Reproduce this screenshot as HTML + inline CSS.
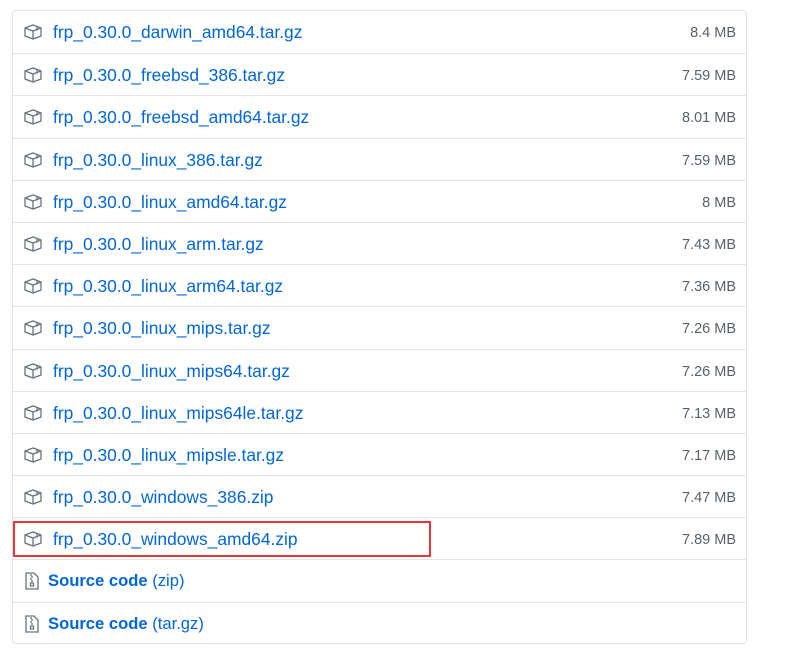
<!DOCTYPE html>
<html><head><meta charset="utf-8"><style>
body{margin:0;background:#fff;font-family:"Liberation Sans",sans-serif;width:790px;height:658px;overflow:hidden;position:relative}
.box{position:absolute;left:12px;top:10px;width:733px;height:632px;border:1px solid #e1e4e8;border-radius:4px}
.row{height:42.2px;box-sizing:border-box;border-top:1px solid #e1e4e8;position:relative}
.row:first-child{border-top:none}
.row svg{position:absolute;left:11px;top:13px}
.name{position:absolute;left:40px;top:11px;color:#0366d6;font-size:17.4px}
.size{position:absolute;right:10px;top:14px;color:#586069;font-size:14.5px}
.src{left:35px;font-weight:bold;font-size:16.6px}
.src span{font-weight:normal}
.red{position:absolute;left:13px;top:521px;width:414px;height:32px;border:2px solid #e8363b}
</style></head><body>
<div class="box">
<div class="row"><svg width="18" height="16" viewBox="0 0 18 16" fill="none" stroke="#6a737d" stroke-width="1.3"><path d="M1 4L9 1l8 3v8l-8 3-8-3z M1 4l8 3 8-3 M9 7v8 M13 2.5v4"/></svg><span class="name">frp_0.30.0_darwin_amd64.tar.gz</span><span class="size">8.4 MB</span></div>
<div class="row"><svg width="18" height="16" viewBox="0 0 18 16" fill="none" stroke="#6a737d" stroke-width="1.3"><path d="M1 4L9 1l8 3v8l-8 3-8-3z M1 4l8 3 8-3 M9 7v8 M13 2.5v4"/></svg><span class="name">frp_0.30.0_freebsd_386.tar.gz</span><span class="size">7.59 MB</span></div>
<div class="row"><svg width="18" height="16" viewBox="0 0 18 16" fill="none" stroke="#6a737d" stroke-width="1.3"><path d="M1 4L9 1l8 3v8l-8 3-8-3z M1 4l8 3 8-3 M9 7v8 M13 2.5v4"/></svg><span class="name">frp_0.30.0_freebsd_amd64.tar.gz</span><span class="size">8.01 MB</span></div>
<div class="row"><svg width="18" height="16" viewBox="0 0 18 16" fill="none" stroke="#6a737d" stroke-width="1.3"><path d="M1 4L9 1l8 3v8l-8 3-8-3z M1 4l8 3 8-3 M9 7v8 M13 2.5v4"/></svg><span class="name">frp_0.30.0_linux_386.tar.gz</span><span class="size">7.59 MB</span></div>
<div class="row"><svg width="18" height="16" viewBox="0 0 18 16" fill="none" stroke="#6a737d" stroke-width="1.3"><path d="M1 4L9 1l8 3v8l-8 3-8-3z M1 4l8 3 8-3 M9 7v8 M13 2.5v4"/></svg><span class="name">frp_0.30.0_linux_amd64.tar.gz</span><span class="size">8 MB</span></div>
<div class="row"><svg width="18" height="16" viewBox="0 0 18 16" fill="none" stroke="#6a737d" stroke-width="1.3"><path d="M1 4L9 1l8 3v8l-8 3-8-3z M1 4l8 3 8-3 M9 7v8 M13 2.5v4"/></svg><span class="name">frp_0.30.0_linux_arm.tar.gz</span><span class="size">7.43 MB</span></div>
<div class="row"><svg width="18" height="16" viewBox="0 0 18 16" fill="none" stroke="#6a737d" stroke-width="1.3"><path d="M1 4L9 1l8 3v8l-8 3-8-3z M1 4l8 3 8-3 M9 7v8 M13 2.5v4"/></svg><span class="name">frp_0.30.0_linux_arm64.tar.gz</span><span class="size">7.36 MB</span></div>
<div class="row"><svg width="18" height="16" viewBox="0 0 18 16" fill="none" stroke="#6a737d" stroke-width="1.3"><path d="M1 4L9 1l8 3v8l-8 3-8-3z M1 4l8 3 8-3 M9 7v8 M13 2.5v4"/></svg><span class="name">frp_0.30.0_linux_mips.tar.gz</span><span class="size">7.26 MB</span></div>
<div class="row"><svg width="18" height="16" viewBox="0 0 18 16" fill="none" stroke="#6a737d" stroke-width="1.3"><path d="M1 4L9 1l8 3v8l-8 3-8-3z M1 4l8 3 8-3 M9 7v8 M13 2.5v4"/></svg><span class="name">frp_0.30.0_linux_mips64.tar.gz</span><span class="size">7.26 MB</span></div>
<div class="row"><svg width="18" height="16" viewBox="0 0 18 16" fill="none" stroke="#6a737d" stroke-width="1.3"><path d="M1 4L9 1l8 3v8l-8 3-8-3z M1 4l8 3 8-3 M9 7v8 M13 2.5v4"/></svg><span class="name">frp_0.30.0_linux_mips64le.tar.gz</span><span class="size">7.13 MB</span></div>
<div class="row"><svg width="18" height="16" viewBox="0 0 18 16" fill="none" stroke="#6a737d" stroke-width="1.3"><path d="M1 4L9 1l8 3v8l-8 3-8-3z M1 4l8 3 8-3 M9 7v8 M13 2.5v4"/></svg><span class="name">frp_0.30.0_linux_mipsle.tar.gz</span><span class="size">7.17 MB</span></div>
<div class="row"><svg width="18" height="16" viewBox="0 0 18 16" fill="none" stroke="#6a737d" stroke-width="1.3"><path d="M1 4L9 1l8 3v8l-8 3-8-3z M1 4l8 3 8-3 M9 7v8 M13 2.5v4"/></svg><span class="name">frp_0.30.0_windows_386.zip</span><span class="size">7.47 MB</span></div>
<div class="row"><svg width="18" height="16" viewBox="0 0 18 16" fill="none" stroke="#6a737d" stroke-width="1.3"><path d="M1 4L9 1l8 3v8l-8 3-8-3z M1 4l8 3 8-3 M9 7v8 M13 2.5v4"/></svg><span class="name">frp_0.30.0_windows_amd64.zip</span><span class="size">7.89 MB</span></div>
<div class="row"><svg width="14" height="18" viewBox="0 0 14 18" fill="none" stroke="#6a737d" stroke-width="1.3" style="left:12px;top:12px"><path d="M1 1h8l4 4v12H1z M6 2v2 M7 4v2 M6 6v2 M7 8v2 M5.5 11h3v3h-3z"/></svg><span class="name src">Source code <span>(zip)</span></span></div>
<div class="row"><svg width="14" height="18" viewBox="0 0 14 18" fill="none" stroke="#6a737d" stroke-width="1.3" style="left:12px;top:12px"><path d="M1 1h8l4 4v12H1z M6 2v2 M7 4v2 M6 6v2 M7 8v2 M5.5 11h3v3h-3z"/></svg><span class="name src">Source code <span>(tar.gz)</span></span></div>
</div>
<div class="red"></div>
</body></html>
